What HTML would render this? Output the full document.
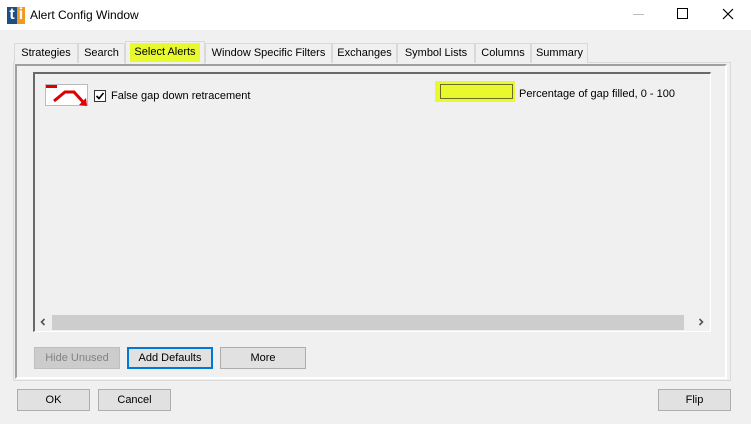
<!DOCTYPE html>
<html><head><style>
*{margin:0;padding:0;box-sizing:border-box}
body{width:751px;height:424px;background:#f0f0f0;font-family:"Liberation Sans",sans-serif;font-size:11px;color:#000;position:relative;overflow:hidden}
.a{position:absolute}
.tab{position:absolute;top:43px;height:20px;border:1px solid #d9d9d9;border-bottom:none;background:#f0f0f0;text-align:center;line-height:18px;font-size:11px}
.btn{position:absolute;height:22px;border:1px solid #adadad;background:#e1e1e1;text-align:center;line-height:20px;font-size:11px}
</style></head><body>
<div class="a" style="left:0;top:0;width:751px;height:30px;background:#fff"></div>
<div class="a" style="left:7px;top:5px;width:18px;height:19px">
<div class="a" style="left:0;top:2px;width:10px;height:17px;background:#1b4f86;color:#fff;font-weight:bold;font-size:16px;line-height:16px;text-align:center">t</div>
<div class="a" style="left:10px;top:2px;width:8px;height:17px;background:#f39a1e;color:#fff;font-weight:bold;font-size:16px;line-height:16px;text-align:center">i</div>
</div>
<div class="a" style="left:30px;top:8px;font-size:12px">Alert Config Window</div>
<div class="a" style="left:633px;top:14px;width:11px;height:1px;background:#bbb"></div>
<div class="a" style="left:677px;top:8px;width:11px;height:11px;border:1px solid #000"></div>
<svg class="a" style="left:722px;top:8px" width="12" height="12"><path d="M1 1L11 11M11 1L1 11" stroke="#000" stroke-width="1.2"/></svg>

<div class="a" style="left:13px;top:62px;width:718px;height:319px;border:1px solid #d9d9d9;background:#f0f0f0"></div>
<div class="tab" style="left:14px;width:64px">Strategies</div>
<div class="tab" style="left:78px;width:47px">Search</div>
<div class="tab" style="left:125px;width:80px;top:41px;height:23px;background:#f0f0f0;z-index:2"><span style="background:#e8f92d;padding:2px 4px;line-height:15px;display:inline-block;margin-top:1px">Select Alerts</span></div>
<div class="tab" style="left:205px;width:127px">Window Specific Filters</div>
<div class="tab" style="left:332px;width:65px">Exchanges</div>
<div class="tab" style="left:397px;width:78px">Symbol Lists</div>
<div class="tab" style="left:475px;width:56px">Columns</div>
<div class="tab" style="left:531px;width:57px">Summary</div>

<div class="a" style="left:15px;top:64px;width:712px;height:315px;border-left:2px solid #a0a0a0;border-top:2px solid #a0a0a0;border-right:2px solid #fff;border-bottom:2px solid #fff"></div>

<div class="a" style="left:33px;top:72px;width:678px;height:260px;border-left:2px solid #696969;border-top:2px solid #696969;border-right:1px solid #fff;border-bottom:1px solid #fff"></div>

<div class="a" style="left:45px;top:84px;width:43px;height:22px;background:#fff;border:1px solid #bbb"></div>
<div class="a" style="left:46px;top:85px;width:11px;height:3px;background:#d00"></div>
<svg class="a" style="left:45px;top:84px" width="45" height="24"><path d="M9 17L20 8L29 8L39 19" stroke="#d00" stroke-width="3" fill="none"/><path d="M34 21L42 22L41 14Z" fill="#d00"/></svg>
<div class="a" style="left:94px;top:90px;width:12px;height:12px;border:1px solid #333;background:#fff"></div>
<svg class="a" style="left:95px;top:91px" width="10" height="10"><path d="M1.5 5L4 7.5L8.5 2" stroke="#000" stroke-width="1.6" fill="none"/></svg>
<div class="a" style="left:111px;top:90px">False gap down retracement</div>

<div class="a" style="left:435px;top:81px;width:80px;height:21px;background:#e8f92d"></div>
<div class="a" style="left:440px;top:84px;width:73px;height:15px;border:1px solid #6b6b2a;background:#e8f92d"></div>
<div class="a" style="left:519px;top:88px">Percentage of gap filled, 0 - 100</div>

<div class="a" style="left:35px;top:314px;width:675px;height:17px;background:#f0f0f0"></div>
<div class="a" style="left:52px;top:315px;width:632px;height:15px;background:#cdcdcd"></div>
<svg class="a" style="left:39px;top:318px" width="8" height="8"><path d="M5.5 1L2.5 4L5.5 7" stroke="#555" stroke-width="1.6" fill="none"/></svg>
<svg class="a" style="left:697px;top:318px" width="8" height="8"><path d="M2.5 1L5.5 4L2.5 7" stroke="#555" stroke-width="1.6" fill="none"/></svg>

<div class="btn" style="left:34px;top:347px;width:86px;background:#cccccc;border-color:#bfbfbf;color:#838383">Hide Unused</div>
<div class="btn" style="left:127px;top:347px;width:86px;border:2px solid #0078d7;line-height:18px">Add Defaults</div>
<div class="btn" style="left:220px;top:347px;width:86px">More</div>

<div class="btn" style="left:17px;top:389px;width:73px">OK</div>
<div class="btn" style="left:98px;top:389px;width:73px">Cancel</div>
<div class="btn" style="left:658px;top:389px;width:73px">Flip</div>
</body></html>
